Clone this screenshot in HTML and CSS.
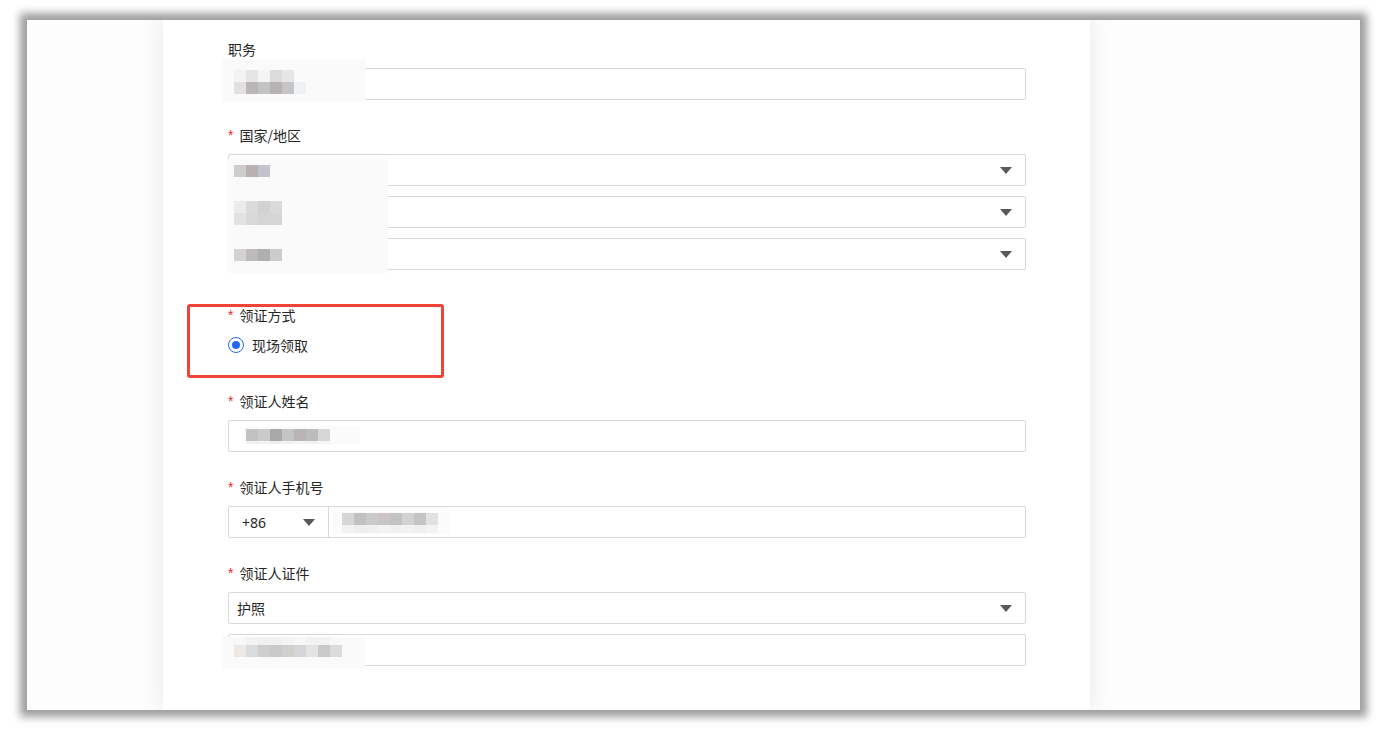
FILE: index.html
```html
<!DOCTYPE html>
<html lang="zh-CN">

<head>
    <meta charset="UTF-8">
    <title>领证信息</title>
    <link rel="stylesheet" href="styles.css">
</head>

<body>
    <div class="screen">
        <div class="card">

            <div class="field">
                <div class="label">职务</div>
                <div class="input"></div>
                <div class="mosaic mosaic-title">
                    <div class="cells cols-6">
                        <i style="background:#f3f3f3"></i><i style="background:#e4e4e4"></i><i style="background:#f4f4f4"></i><i style="background:#dedbdd"></i><i style="background:#e6e6e6"></i><i style="background:#f8fafb"></i>
                        <i style="background:#e2e0e2"></i><i style="background:#b9b6b7"></i><i style="background:#c3c3c3"></i><i style="background:#b7b2b4"></i><i style="background:#c6c5c5"></i><i style="background:#eef2f5"></i>
                    </div>
                </div>
            </div>

            <div class="field field-country">
                <div class="label"><span class="req">*</span>国家/地区</div>
                <div class="input select"><span class="arrow"></span></div>
                <div class="input select"><span class="arrow"></span></div>
                <div class="input select"><span class="arrow"></span></div>
                <div class="mosaic mosaic-country">
                    <div class="cells cols-3">
                        <i style="background:#cfcdcc"></i><i style="background:#b8b1b0"></i><i style="background:#c2c3cb"></i>
                    </div>
                    <div class="cells cols-4">
                        <i style="background:#ebebea"></i><i style="background:#dcdbdb"></i><i style="background:#d2d2d2"></i><i style="background:#d9dadc"></i>
                        <i style="background:#e2e2e2"></i><i style="background:#d8d8d8"></i><i style="background:#d6d4d4"></i><i style="background:#d5d6d8"></i>
                    </div>
                    <div class="cells cols-4">
                        <i style="background:#d3d2d1"></i><i style="background:#bcbaba"></i><i style="background:#afafb0"></i><i style="background:#cbcdcd"></i>
                    </div>
                </div>
            </div>

            <div class="field field-radio">
                <div class="label"><span class="req">*</span>领证方式</div>
                <label class="radio">
                    <span class="radio-dot"></span>
                    现场领取
                </label>
                <div class="mark"></div>
            </div>

            <div class="field">
                <div class="label"><span class="req">*</span>领证人姓名</div>
                <div class="input"></div>
                <div class="mosaic mosaic-name">
                    <div class="cells cols-7">
                        <i style="background:#c2c2c2"></i><i style="background:#cbcbcb"></i><i style="background:#a9a9a9"></i><i style="background:#c5c5c5"></i><i style="background:#b8b4b7"></i><i style="background:#bcbcba"></i><i style="background:#d6d7d9"></i>
                        <i style="background:#f1f1f1"></i><i style="background:#f3f3f3"></i><i style="background:#efefef"></i><i style="background:#f2f2f2"></i><i style="background:#f3f3f3"></i><i style="background:#f1f1f1"></i><i style="background:#f6f6f6"></i>
                    </div>
                </div>
            </div>

            <div class="field">
                <div class="label"><span class="req">*</span>领证人手机号</div>
                <div class="input phone">
                    <div class="prefix">+86<span class="arrow"></span></div>
                </div>
                <div class="mosaic mosaic-phone">
                    <div class="cells cols-8">
                        <i style="background:#d7d6d5"></i><i style="background:#c1c1c1"></i><i style="background:#cacaca"></i><i style="background:#cac5c4"></i><i style="background:#c3c3c3"></i><i style="background:#d3d3d2"></i><i style="background:#c6c3c5"></i><i style="background:#dfe1e3"></i>
                        <i style="background:#f2f2f2"></i><i style="background:#eeeeee"></i><i style="background:#f0f0f0"></i><i style="background:#f3f3f3"></i><i style="background:#f1f1f1"></i><i style="background:#f2f2f2"></i><i style="background:#efefef"></i><i style="background:#f3f3f3"></i>
                    </div>
                </div>
            </div>

            <div class="field">
                <div class="label"><span class="req">*</span>领证人证件</div>
                <div class="input select">护照<span class="arrow"></span></div>
                <div class="input input-gap"></div>
                <div class="mosaic mosaic-cert">
                    <div class="cells cols-9">
                        <i style="background:#f8f8f8"></i><i style="background:#f3f3f3"></i><i style="background:#f0f0f0"></i><i style="background:#f1f1f1"></i><i style="background:#f4f4f4"></i><i style="background:#f7f7f7"></i><i style="background:#f2f2f2"></i><i style="background:#f3f3f3"></i><i style="background:#f8f8f8"></i>
                        <i style="background:#ede7e6"></i><i style="background:#d8dcdf"></i><i style="background:#cfcdcd"></i><i style="background:#c9c9ca"></i><i style="background:#d1cfce"></i><i style="background:#d5d5d8"></i><i style="background:#e4e3e4"></i><i style="background:#cac8c9"></i><i style="background:#dcdcde"></i>
                    </div>
                </div>
            </div>

        </div>
    </div>
</body>

</html>
```

FILE: styles.css
```css
html,
body {
    height: 730px;
}

body {
    margin: 0;
    padding-top: 20px;
    box-sizing: border-box;
    background-color: #ffffff;
    font-family: "Noto Sans CJK SC", "Noto Sans", sans-serif;
    color: #262626;
}

.screen {
    margin-left: 27px;
    width: 1333px;
    height: 690px;
    overflow: hidden;
    background-color: #fdfdfd;
    box-shadow: 0 0 8px 7px rgba(0, 0, 0, 0.38);
}

.card {
    margin-left: 136px;
    width: 927px;
    height: 100%;
    box-sizing: border-box;
    padding: 18px 64px 0 65px;
    background-color: #ffffff;
    box-shadow: 0 0 22px rgba(0, 0, 0, 0.09);
}

.field {
    position: relative;
    margin-bottom: 24px;
}

.field-country,
.field-radio {
    margin-bottom: 34px;
}

.label {
    display: flex;
    align-items: center;
    height: 22px;
    font-size: 14px;
    line-height: 22px;
    margin-bottom: 8px;
}

.req {
    color: #f5222d;
    margin-right: 6px;
    font-family: "Liberation Sans", sans-serif;
    line-height: 1;
}

.input {
    display: flex;
    align-items: center;
    height: 32px;
    box-sizing: border-box;
    padding: 0 13px 0 8px;
    border: 1px solid #d9d9d9;
    border-radius: 2px;
    background-color: #ffffff;
    font-size: 14px;
}

.select + .select,
.input-gap {
    margin-top: 10px;
}

.arrow {
    margin-left: auto;
    width: 0;
    height: 0;
    border-left: 6px solid transparent;
    border-right: 6px solid transparent;
    border-top: 7px solid #595959;
}

.phone {
    padding: 0;
}

.prefix {
    display: flex;
    align-items: center;
    width: 100px;
    height: 100%;
    box-sizing: border-box;
    padding: 0 13px 0 13px;
    border-right: 1px solid #d9d9d9;
    font-family: "Noto Sans", sans-serif;
    font-size: 14px;
}

/* radio */
.radio {
    display: flex;
    align-items: center;
    gap: 8px;
    height: 22px;
    font-size: 14px;
}

.radio-dot {
    width: 16px;
    height: 16px;
    box-sizing: border-box;
    border: 1px solid #2468f2;
    border-radius: 50%;
    display: flex;
    align-items: center;
    justify-content: center;
}

.radio-dot::after {
    content: "";
    width: 8px;
    height: 8px;
    border-radius: 50%;
    background-color: #2468f2;
}

/* red annotation box */
.mark {
    position: absolute;
    left: -41px;
    top: 0;
    width: 257px;
    height: 74px;
    box-sizing: border-box;
    border: 3px solid #f04438;
    border-radius: 3px;
}

/* pixelated blur over private values */
.mosaic {
    position: absolute;
    background-color: #fafafa;
    box-sizing: border-box;
}

.cells {
    display: grid;
    grid-auto-rows: 12px;
}

.cells i {
    display: block;
}

.cols-3 { grid-template-columns: repeat(3, 12px); }
.cols-4 { grid-template-columns: repeat(4, 12px); }
.cols-6 { grid-template-columns: repeat(6, 12px); }
.cols-7 { grid-template-columns: repeat(7, 12px); }
.cols-8 { grid-template-columns: repeat(8, 12px); }
.cols-9 { grid-template-columns: repeat(9, 12px); }

.mosaic-title {
    left: -6px;
    top: 21px;
    width: 143px;
    height: 43px;
    padding: 11px 0 0 12px;
}

.mosaic-country {
    left: -1px;
    top: 35px;
    width: 161px;
    height: 114px;
    padding: 6px 0 0 7px;
}

.mosaic-country .cells + .cells {
    margin-top: 24px;
}

.mosaic-name {
    left: 16px;
    top: 36px;
    width: 116px;
    height: 18px;
    padding: 3px 0 0 2px;
    background-color: #fbfbfb;
}

.mosaic-name .cells {
    grid-template-rows: 12px 3px;
}

.mosaic-phone {
    left: 105px;
    top: 31px;
    width: 116px;
    height: 27px;
    padding: 6px 0 0 9px;
    background-color: #fbfbfb;
}

.mosaic-phone .cells {
    grid-template-rows: 12px 8px;
}

.mosaic-cert {
    left: -6px;
    top: 75px;
    width: 143px;
    height: 32px;
    padding: 0 0 0 12px;
}

.mosaic-cert .cells {
    grid-template-rows: 8px 12px;
}
```
